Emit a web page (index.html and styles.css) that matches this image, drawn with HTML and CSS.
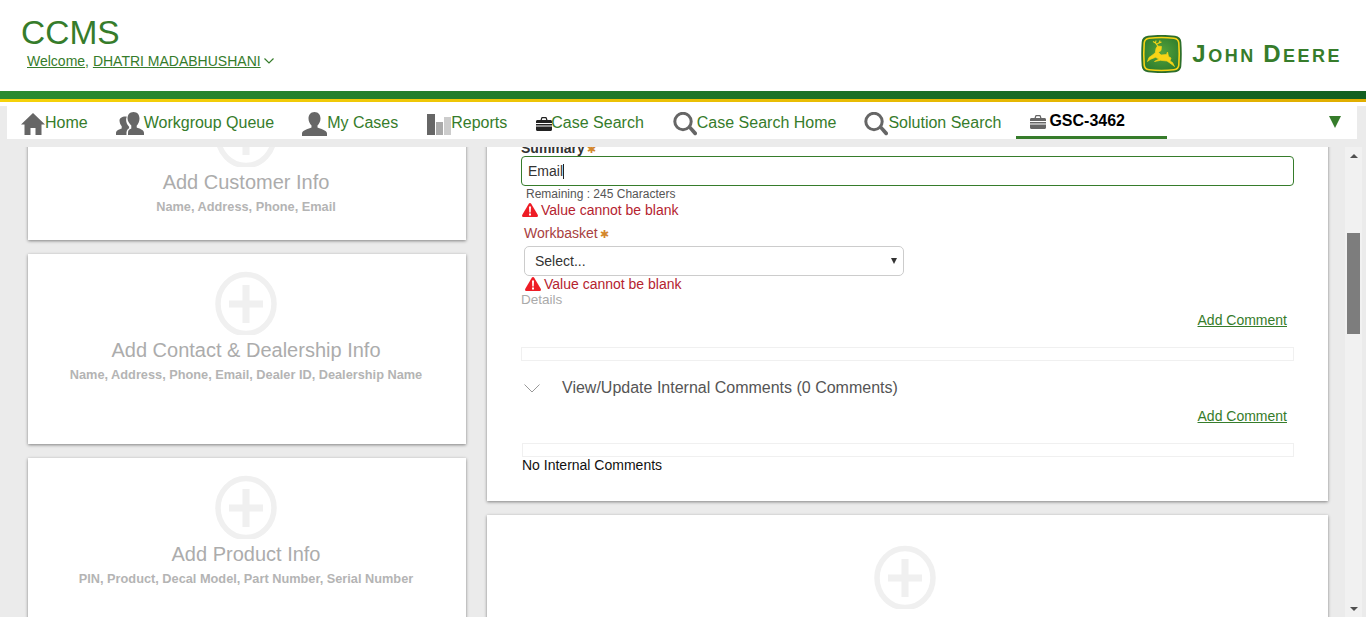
FILE: index.html
```html
<!DOCTYPE html>
<html lang="en">
<head>
	<meta charset="utf-8" />
	<title>CCMS</title>
	<link rel="stylesheet" href="styles.css">
</head>
<body>
	<svg class="defs" width="0" height="0">
		<symbol id="i-case" viewBox="0 0 16 14">
			<path d="M4.500 3 5.200 .8C5.300 .3 5.700 0 6.200 0h3.600c.5 0 .9.300 1 .8L11.500 3h-1.300L9.600 1.200H6.400L5.800 3z"/>
			<path d="M1.500 3h13C15.400 3 16 3.600 16 4.500V6H0V4.500C0 3.600.6 3 1.500 3zM0 7h16v1.500H0zM0 9.500h16v3C16 13.400 15.400 14 14.500 14h-13C.6 14 0 13.400 0 12.500z"/>
		</symbol>
		<symbol id="i-search" viewBox="0 0 24 24">
			<circle cx="10" cy="9.500" r="8.200" fill="none" stroke="#666" stroke-width="3"/>
			<path d="M15.500 16.500l2.500-2.500 5.500 6c.8.900.7 2 0 2.700s-1.800.8-2.700 0z" fill="#666"/>
		</symbol>
		<symbol id="i-plus" viewBox="0 0 64 64">
			<ellipse cx="32" cy="33" rx="28" ry="29.500" fill="none" stroke="#f0f0f0" stroke-width="5.500"/>
			<path d="M28.500 14h7v15.500H49v7H35.500V52h-7V36.500H15v-7h13.500z" fill="#f0f0f0"/>
		</symbol>
		<symbol id="i-warn" viewBox="0 0 16 14">
			<path d="M8 0c.5 0 .9.300 1.200.8l6.500 11c.6 1.100 0 2.200-1.200 2.200H1.500C.3 14-.3 12.900.3 11.800L6.800.8C7.100.3 7.500 0 8 0z" fill="#ee1c25"/>
			<path d="M7 3.500h2l-.3 6H7.300zM7 10.500h2v2H7z" fill="#fff"/>
		</symbol>
	</svg>

	<header class="top">
		<div class="brand">
			<h1>CCMS</h1>
			<div class="welcome">
				<a href="#">Welcome</a>, <a href="#" class="user">DHATRI MADABHUSHANI</a>
				<svg class="chev" width="10" height="6" viewBox="0 0 10 6"><path d="M.5.5 5 5 9.500.5" fill="none" stroke="#367c2b" stroke-width="1.200"/></svg>
			</div>
		</div>
		<div class="logo">
			<svg width="41" height="38" viewBox="0 0 41 38">
				<defs>
					<radialGradient id="shield" cx="50%" cy="45%" r="60%">
						<stop offset="0" stop-color="#55a33c"/>
						<stop offset="1" stop-color="#2f7d2d"/>
					</radialGradient>
				</defs>
				<path d="M7 .8C15-.2 26-.2 34 .8 38 1.300 40 3.500 40.300 7c.6 8 .6 16 0 24-.3 3.500-2.300 5.700-6.300 6.200-8 1-19 1-27 0C3 36.700 1 34.500.7 31c-.6-8-.6-16 0-24C1 3.500 3 1.300 7 .8z" fill="#2c6e2a"/>
				<path d="M8 3.200c8-.9 17-.9 25 0 3 .4 4.500 2 4.800 4.700.6 7.400.6 14.800 0 22.200-.3 2.700-1.800 4.300-4.800 4.700-8 .9-17 .9-25 0-3-.4-4.500-2-4.800-4.700-.6-7.400-.6-14.800 0-22.200C3.500 5.200 5 3.600 8 3.200z" fill="url(#shield)" stroke="#f7d416" stroke-width="1.600"/>
				<path d="M20.500 11.500l-4-.5-1.500 2.500-.8 4.500L8 22.500l-1.500 4 2.500-2 5.500-2.200 3.500 1.700-4.500 2.500 6-1.200 6.500.7 5 3.500 2.500 2-2-4-2.500-1.500 1-3-2.500-1.500-1-4.500-1 2.500-5.500.5-2.500-2.500 2.500-2z" fill="#f7d416" stroke="#f7d416" stroke-width=".7"/>
				<path d="M17 11.500 14.500 8l-2.500-1.500M14.500 8l.5-2.500M15.500 9.500l3-2 .5-2M18 8l2.500-1" fill="none" stroke="#f7d416" stroke-width="1.100"/>
			</svg>
			<span class="wordmark"><b>J</b>OHN <b>D</b>EERE</span>
		</div>
	</header>
	<div class="stripe"></div>
	<div class="nav-wrap">
		<nav class="nav">
			<a href="#" class="nav-item">
				<svg width="24" height="24" viewBox="0 0 24 24"><path d="M12 1 24 12.500h-3.500V23h-6v-7h-5v7h-6V12.500H0z"/></svg>
				Home
			</a>
			<a href="#" class="nav-item">
				<svg width="28" height="24" viewBox="0 0 28 24"><path d="M17.500 0c3.800 0 6 2.800 6 6.500 0 2.900-1.200 5.500-2.800 7.200v1.800c2.500 1.200 7.300 2 7.300 5.500v2H12v-2c0-2.800 1-3.500 3.300-4.500v-3c-1.400-1.500-3.800-4-3.800-7C11.500 2.800 13.700 0 17.500 0z"/><path d="M9.500 4.500c.6 0 1 .1 1.300.2-.5 1-.7 2-.7 3.300 0 2.500 1.300 5 3 6.800v1.400C10.800 17 10.300 19.500 10.500 23H0v-2c0-2.800 3.700-3.500 5.700-4.500v-2.300C4.500 13 3.500 10.500 3.500 8.500c0-2.300 2.300-4 6-4z"/></svg>
				Workgroup Queue
			</a>
			<a href="#" class="nav-item">
				<svg width="25" height="24" viewBox="0 0 25 24"><path d="M12.500 0c3.800 0 6 2.900 6 6.500 0 3-1.500 5.500-3 7v2c2.500 1.200 9.500 2.500 9.500 6v2.500H0v-2.500c0-3.500 7-4.800 9.500-6v-2c-1.500-1.500-3-4-3-7C6.500 2.900 8.700 0 12.500 0z"/></svg>
				My Cases
			</a>
			<a href="#" class="nav-item nudge">
				<span class="bars"><i class="bar-a"></i><i class="bar-b"></i><i class="bar-c"></i></span>
				Reports
			</a>
			<a href="#" class="nav-item wide-icon">
				<svg class="ic-case" width="16" height="14"><use href="#i-case"/></svg>
				Case Search
			</a>
			<a href="#" class="nav-item nudge">
				<svg width="24" height="24"><use href="#i-search"/></svg>
				Case Search Home
			</a>
			<a href="#" class="nav-item">
				<svg width="24" height="24"><use href="#i-search"/></svg>
				Solution Search
			</a>
			<a href="#" class="nav-item active nudge">
				<svg class="ic-case" width="16" height="14"><use href="#i-case"/></svg>
				GSC-3462
			</a>
			<span class="nav-more"></span>
		</nav>
	</div>

	<main class="page">
		<div class="col-left">
			<section class="card add-card first">
				<svg class="plus" width="64" height="64"><use href="#i-plus"/></svg>
				<h3>Add Customer Info</h3>
				<p>Name, Address, Phone, Email</p>
			</section>
			<section class="card add-card">
				<svg class="plus" width="64" height="64"><use href="#i-plus"/></svg>
				<h3>Add Contact &amp; Dealership Info</h3>
				<p>Name, Address, Phone, Email, Dealer ID, Dealership Name</p>
			</section>
			<section class="card add-card">
				<svg class="plus" width="64" height="64"><use href="#i-plus"/></svg>
				<h3>Add Product Info</h3>
				<p>PIN, Product, Decal Model, Part Number, Serial Number</p>
			</section>
		</div>

		<div class="col-right">
			<section class="card form-card">
				<label class="lbl-summary">Summary<span class="req">✱</span></label>
				<div class="text-input">Email<span class="caret"></span></div>
				<div class="remaining">Remaining : 245 Characters</div>
				<div class="error err-a"><svg width="16" height="14"><use href="#i-warn"/></svg>Value cannot be blank</div>
				<label class="lbl-basket">Workbasket<span class="req">✱</span></label>
				<div class="select-box">Select...<span class="select-arrow"></span></div>
				<div class="error err-b"><svg width="16" height="14"><use href="#i-warn"/></svg>Value cannot be blank</div>
				<div class="details">Details</div>
				<div class="comment-link"><a href="#">Add Comment</a></div>
				<div class="empty-box"></div>
				<div class="accordion">
					<svg width="16" height="9" viewBox="0 0 16 9"><path d="M.5.5 8 8 15.500.5" fill="none" stroke="#999" stroke-width="1"/></svg>
					View/Update Internal Comments (0 Comments)
				</div>
				<div class="comment-link second"><a href="#">Add Comment</a></div>
				<div class="empty-box inner"></div>
				<div class="no-comments">No Internal Comments</div>
			</section>
			<section class="card blank-card">
				<svg class="plus" width="64" height="64"><use href="#i-plus"/></svg>
			</section>
		</div>

		<div class="scrollbar">
			<div class="sb-btn"><span class="sb-up"></span></div>
			<div class="sb-thumb"></div>
			<div class="sb-btn end"><span class="sb-down"></span></div>
		</div>
	</main>
	<div class="foot"></div>
</body>
</html>
```

FILE: styles.css
```css
html, body {
	margin: 0;
	height: 618px;
	overflow: hidden;
}
body {
	display: flex;
	flex-direction: column;
	background: #ebebeb;
	font-family: "Liberation Sans", Arial, sans-serif;
	font-size: 14px;
	color: #333;
}
a {
	color: #367c2b;
}
.defs {
	position: absolute;
}

/* header */
.top {
	height: 91px;
	flex: none;
	display: flex;
	justify-content: space-between;
	background: #fff;
}
.brand {
	padding: 13px 0 0 21px;
}
.brand h1 {
	margin: 0;
	font-size: 33.500px;
	line-height: 39px;
	font-weight: normal;
	color: #367c2b;
}
.welcome {
	margin: 1px 0 0 6px;
	line-height: 16px;
	color: #367c2b;
}
.chev {
	margin-left: -1px;
	vertical-align: 2px;
}
.logo {
	display: flex;
	align-items: center;
	gap: 10px;
	padding: 17px 24px 0 0;
}
.wordmark {
	font-size: 18px;
	font-weight: bold;
	letter-spacing: 2.500px;
	color: #367c2b;
}
.wordmark b {
	font-size: 24px;
}
.stripe {
	height: 11px;
	flex: none;
	background:
		linear-gradient(to right, #2a8b30, #125f20) top / 100% 8px no-repeat,
		linear-gradient(to right, #f5d20a, #e0ae00);
}

/* nav */
.nav-wrap {
	flex: none;
	padding: 4px 9px 0 7px;
	background: linear-gradient(#fff 4px, #ebebeb 4px);
}
.nav {
	height: 33px;
	display: flex;
	align-items: stretch;
	padding-left: 14px;
	background: #fff;
}
.nav-item {
	display: flex;
	align-items: center;
	padding: 0 14px;
	font-size: 16px;
	text-decoration: none;
}
.nav-item:first-child {
	padding-left: 0;
}
.nudge {
	margin-left: 1px;
}
.nav-item svg {
	fill: #666;
	margin-top: 3px;
}
.nav-item .ic-case {
	fill: #222;
	margin-top: 2px;
}
.wide-icon .ic-case {
	margin: 2px -1px 0 1px;
}
.bars {
	display: flex;
	align-items: flex-end;
	gap: 1px;
	height: 21px;
	margin-top: 3px;
}
.bars i {
	display: block;
	width: 7px;
}
.bars .bar-a {
	width: 8px;
	height: 21px;
	background: #666;
}
.bars .bar-b {
	height: 13px;
	background: #aaa;
}
.bars .bar-c {
	height: 18px;
	background: #ccc;
}
.nav-item.active {
	padding-right: 42px;
	font-weight: bold;
	color: #000;
	border-bottom: 3px solid #367c2b;
}
.nav-item.active .ic-case {
	fill: #666;
	margin: 1px 3px 0 0;
}
.nav-more {
	margin: 10px 16px 0 auto;
	width: 0;
	height: 0;
	border-left: 6px solid transparent;
	border-right: 6px solid transparent;
	border-top: 12px solid #367c2b;
}

/* page body */
.page {
	flex: 1;
	min-height: 0;
	margin-top: 8px;
	display: flex;
	align-items: flex-start;
	padding-left: 28px;
	overflow: hidden;
}
.card {
	background: #fff;
	box-shadow: 0 1px 3px rgba(0, 0, 0, .45);
}
.col-left {
	width: 438px;
	flex: none;
	margin-top: -61px;
	display: flex;
	flex-direction: column;
	gap: 14px;
}
.add-card {
	height: 190px;
	flex: none;
	padding: 17px 2px 0 0;
	box-sizing: border-box;
	text-align: center;
}
.add-card.first {
	height: 154px;
}
.plus {
	display: block;
	margin: 0 auto;
}
.add-card h3 {
	margin: 3px 0 0;
	font-size: 20px;
	line-height: 24px;
	font-weight: normal;
	color: #acacac;
}
.add-card p {
	margin: 5px 0 0;
	font-size: 12.750px;
	line-height: 16px;
	font-weight: bold;
	color: #b4b4b4;
}

.col-right {
	width: 841px;
	flex: none;
	margin: -20px 0 0 21px;
	display: flex;
	flex-direction: column;
	gap: 14px;
}
.form-card {
	padding: 13px 34px 28px;
}
.lbl-summary {
	display: block;
	line-height: 16px;
	font-weight: bold;
	color: #333;
}
.req {
	margin-left: 2px;
	font-family: "DejaVu Sans", sans-serif;
	font-size: 11px;
	line-height: 0;
	font-weight: normal;
	color: #d4872c;
}
.text-input {
	height: 30px;
	box-sizing: border-box;
	padding-left: 6px;
	line-height: 28px;
	border: 1px solid #367c2b;
	border-radius: 4px;
	color: #333;
}
.caret {
	display: inline-block;
	width: 1px;
	height: 15px;
	vertical-align: -3px;
	background: #222;
}
.remaining {
	margin: 1px 0 0 5px;
	font-size: 12px;
	line-height: 14px;
	color: #555;
}
.error {
	display: flex;
	align-items: center;
	gap: 3px;
	line-height: 16px;
	color: #b5232f;
}
.err-a {
	margin: 1px 0 0 1px;
}
.err-b {
	margin-left: 4px;
}
.lbl-basket {
	display: block;
	margin: 7px 0 0 3px;
	line-height: 16px;
	color: #a8413f;
}
.select-box {
	width: 380px;
	height: 30px;
	box-sizing: border-box;
	margin: 5px 0 0 3px;
	padding: 0 6px 0 10px;
	display: flex;
	align-items: center;
	justify-content: space-between;
	border: 1px solid #ccc;
	border-radius: 5px;
	color: #333;
}
.select-arrow {
	width: 0;
	height: 0;
	border-left: 3px solid transparent;
	border-right: 3px solid transparent;
	border-top: 6px solid #333;
}
.details {
	font-size: 13.500px;
	line-height: 15px;
	color: #aaa;
}
.comment-link {
	margin-top: 5px;
	padding-right: 7px;
	line-height: 16px;
	text-align: right;
}
.comment-link.second {
	margin-top: 10px;
}
.empty-box {
	height: 14px;
	box-sizing: border-box;
	margin-top: 19px;
	border: 1px solid #f0f0f0;
}
.empty-box.inner {
	margin-left: 1px;
}
.accordion {
	margin: 17px 0 0 3px;
	display: flex;
	align-items: center;
	gap: 22px;
	font-size: 16px;
	line-height: 20px;
	color: #555;
}
.no-comments {
	margin-left: 1px;
	line-height: 16px;
	color: #111;
}
.blank-card {
	height: 200px;
	flex: none;
	padding: 30px 6px 0 0;
}

/* scrollbar */
.scrollbar {
	width: 17px;
	height: 470px;
	flex: none;
	margin-left: 17px;
	display: flex;
	flex-direction: column;
	align-items: center;
	background: #f1f1f1;
}
.sb-btn {
	height: 17px;
	flex: none;
	display: flex;
	align-items: center;
	justify-content: center;
}
.sb-btn.end {
	margin-top: auto;
}
.sb-up {
	border-left: 4px solid transparent;
	border-right: 4px solid transparent;
	border-bottom: 4px solid #505050;
}
.sb-down {
	border-left: 4px solid transparent;
	border-right: 4px solid transparent;
	border-top: 4px solid #505050;
}
.sb-thumb {
	width: 13px;
	height: 101px;
	flex: none;
	margin-top: 69px;
	background: #7d7d7d;
}
.foot {
	height: 1px;
	flex: none;
	background: #fff;
}
```
